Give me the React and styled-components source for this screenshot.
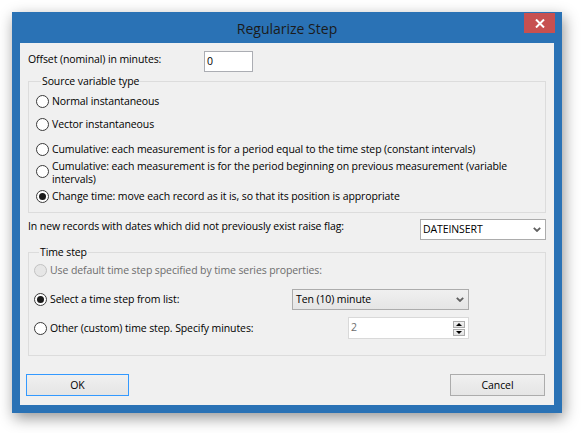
import React from 'react';
import styled, { createGlobalStyle } from 'styled-components';

const GlobalStyle = createGlobalStyle`
  html, body {
    margin: 0;
    padding: 0;
    background: #ffffff;
  }
  body {
    font-family: "Open Sans", "Noto Sans", sans-serif;
    color: #000;
  }
`;

const Page = styled.div`
  width: 582px;
  height: 433px;
  padding: 12px 0 0 12px;
  box-sizing: border-box;
`;

const Window = styled.div`
  width: 550px;
  height: 401px;
  box-sizing: border-box;
  padding: 0 8px 8px;
  background: #2a72b5;
  display: flex;
  flex-direction: column;
  box-shadow: 2px 5px 14px rgba(0, 0, 0, 0.42);
`;

const TitleBar = styled.div`
  height: 31px;
  flex: none;
  display: grid;
  grid-template-columns: 1fr auto 1fr;
  align-items: center;
`;

const Title = styled.div`
  grid-column: 2;
  font-size: 14px;
  color: #1b1b1b;
  padding-top: 1px;
`;

const CloseButton = styled.div`
  grid-column: 3;
  justify-self: end;
  align-self: start;
  width: 31px;
  height: 20px;
  margin: 1px -1px 0 0;
  background: #c75050;
  display: grid;
  place-items: center;
`;

const Client = styled.div`
  flex: 1;
  background: #f0f0f0;
  padding: 8px 8px 9px;
  display: flex;
  flex-direction: column;
  font-size: 10.5px;
  letter-spacing: -0.1px;
  line-height: 15px;
`;

const FieldRow = styled.div`
  display: flex;
  align-items: flex-start;
  justify-content: ${p => (p.$spread ? 'space-between' : 'flex-start')};
  margin-top: ${p => p.$top || 0}px;
`;

const Label = styled.span`
  width: ${p => (p.$width ? `${p.$width}px` : 'auto')};
  margin-top: ${p => p.$top || 0}px;
  flex: none;
`;

const TextBox = styled.div`
  width: ${p => p.$width}px;
  height: ${p => p.$height || 21}px;
  box-sizing: border-box;
  border: 1px solid ${p => (p.$soft ? '#d9d9d9' : '#abadb3')};
  background: #fff;
  color: ${p => (p.$soft ? '#6d6d6d' : '#000')};
  padding: 2px 0 0 2px;
  display: flex;
  align-items: flex-start;
  justify-content: space-between;
  justify-self: end;
`;

const Group = styled.fieldset`
  margin: ${p => p.$top || 0}px 0 0;
  padding: 0 0 ${p => p.$bottom || 0}px ${p => p.$indent || 0}px;
  border: 1px solid #dcdcdc;
  min-width: 0;
`;

const Legend = styled.legend`
  margin-left: 5px;
  padding: 0 1px;
  line-height: 15px;
  height: 15px;
`;

const RadioRow = styled.div`
  display: flex;
  align-items: center;
  gap: 3px;
  min-height: 17px;
  margin-top: ${p => p.$top || 0}px;
  color: ${p => (p.$disabled ? '#6d6d6d' : '#000')};
  line-height: ${p => (p.$wrap ? '13px' : '15px')};
`;

const RadioCircle = styled.span`
  width: 13px;
  height: 13px;
  box-sizing: border-box;
  border-radius: 50%;
  border: 1px solid ${p => (p.$disabled ? '#c2c2c2' : '#3a3a3a')};
  background: ${p => (p.$disabled ? '#e6e6e6' : '#ffffff')};
  display: grid;
  place-items: center;
  flex: none;
  align-self: ${p => (p.$high ? 'flex-start' : 'center')};
  margin-top: ${p => (p.$high ? '5px' : '0')};

  &::after {
    content: '';
    display: ${p => (p.$checked ? 'block' : 'none')};
    width: 7px;
    height: 7px;
    border-radius: 50%;
    background: #1a1a1a;
  }
`;

const ControlRow = styled.div`
  display: grid;
  grid-template-columns: 258px 177px;
  align-items: center;
  margin-top: ${p => p.$top || 0}px;
`;

const Combo = styled.div`
  width: ${p => p.$width}px;
  height: 21px;
  box-sizing: border-box;
  border: 1px solid #acacac;
  background: ${p => (p.$flat ? '#ffffff' : 'linear-gradient(#f0f0f0, #e5e5e5)')};
  padding: 0 4px 0 ${p => (p.$flat ? 2 : 3)}px;
  display: flex;
  align-items: center;
  justify-content: space-between;
`;

const Spinner = styled.div`
  display: flex;
  flex-direction: column;
  gap: 1px;
  margin: 1px 3px 0 0;
`;

const SpinButton = styled.div`
  width: 12px;
  height: 7px;
  box-sizing: border-box;
  border: 1px solid #acacac;
  background: linear-gradient(#f2f2f2, #e2e2e2);
  display: grid;
  place-items: center;
`;

const ButtonBar = styled.div`
  display: flex;
  justify-content: space-between;
  margin-top: 18px;
  padding: 0 1px 0 0;
  margin-left: -2px;
`;

const Button = styled.div`
  width: ${p => p.$width}px;
  height: 22px;
  box-sizing: border-box;
  border: 1px solid ${p => (p.$focused ? '#3399ff' : '#acacac')};
  background: linear-gradient(#f0f0f0, #e5e5e5);
  display: grid;
  place-items: center;
`;

const Chevron = () => (
  <svg width="8" height="5" viewBox="0 0 8 5">
    <polyline points="0.8,0.8 4,4 7.2,0.8" fill="none" stroke="#606060" strokeWidth="1.8" />
  </svg>
);

const Arrow = ({ down }) => (
  <svg width="6" height="3" viewBox="0 0 6 3">
    <polygon points={down ? '0,0 6,0 3,3' : '0,3 6,3 3,0'} fill="#000" />
  </svg>
);

const Radio = ({ checked, disabled, wrap, top, children }) => (
  <RadioRow $top={top} $disabled={disabled} $wrap={wrap}>
    <RadioCircle $checked={checked} $disabled={disabled} $high={wrap} />
    <span>{children}</span>
  </RadioRow>
);

export default function App() {
  return (
    <Page>
      <GlobalStyle />
      <Window>
        <TitleBar>
          <Title>Regularize Step</Title>
          <CloseButton>
            <svg width="10" height="9" viewBox="0 0 10 9">
              <path d="M1 0.5 L9 8.5 M9 0.5 L1 8.5" stroke="#fff" strokeWidth="2" />
            </svg>
          </CloseButton>
        </TitleBar>
        <Client>
          <FieldRow>
            <Label $width={176} $top={1}>Offset (nominal) in minutes:</Label>
            <TextBox $width={49}>0</TextBox>
          </FieldRow>

          <Group $top={2} $indent={7} $bottom={7}>
            <Legend>Source variable type</Legend>
            <Radio top={4}>Normal instantaneous</Radio>
            <Radio top={6}>Vector instantaneous</Radio>
            <Radio top={8}>
              Cumulative: each measurement is for a period equal to the time step (constant intervals)
            </Radio>
            <Radio top={2} wrap>
              Cumulative: each measurement is for the period beginning on previous measurement (variable
              <br />
              intervals)
            </Radio>
            <Radio top={2} checked>
              Change time: move each record as it is, so that its position is appropriate
            </Radio>
          </Group>

          <FieldRow $spread $top={6}>
            <Label>In new records with dates which did not previously exist raise flag:</Label>
            <Combo $width={126} $flat>
              <span>DATEINSERT</span>
              <Chevron />
            </Combo>
          </FieldRow>

          <Group $top={5} $indent={5} $bottom={16}>
            <Legend>Time step</Legend>
            <Radio top={2} disabled>
              Use default time step specified by time series properties:
            </Radio>
            <ControlRow $top={10}>
              <Radio checked>Select a time step from list:</Radio>
              <Combo $width={177}>
                <span>Ten (10) minute</span>
                <Chevron />
              </Combo>
            </ControlRow>
            <ControlRow $top={7}>
              <Radio>Other (custom) time step. Specify minutes:</Radio>
              <TextBox $width={121} $height={22} $soft>
                <span>2</span>
                <Spinner>
                  <SpinButton>
                    <Arrow />
                  </SpinButton>
                  <SpinButton>
                    <Arrow down />
                  </SpinButton>
                </Spinner>
              </TextBox>
            </ControlRow>
          </Group>

          <ButtonBar>
            <Button $width={103} $focused>OK</Button>
            <Button $width={95}>Cancel</Button>
          </ButtonBar>
        </Client>
      </Window>
    </Page>
  );
}
